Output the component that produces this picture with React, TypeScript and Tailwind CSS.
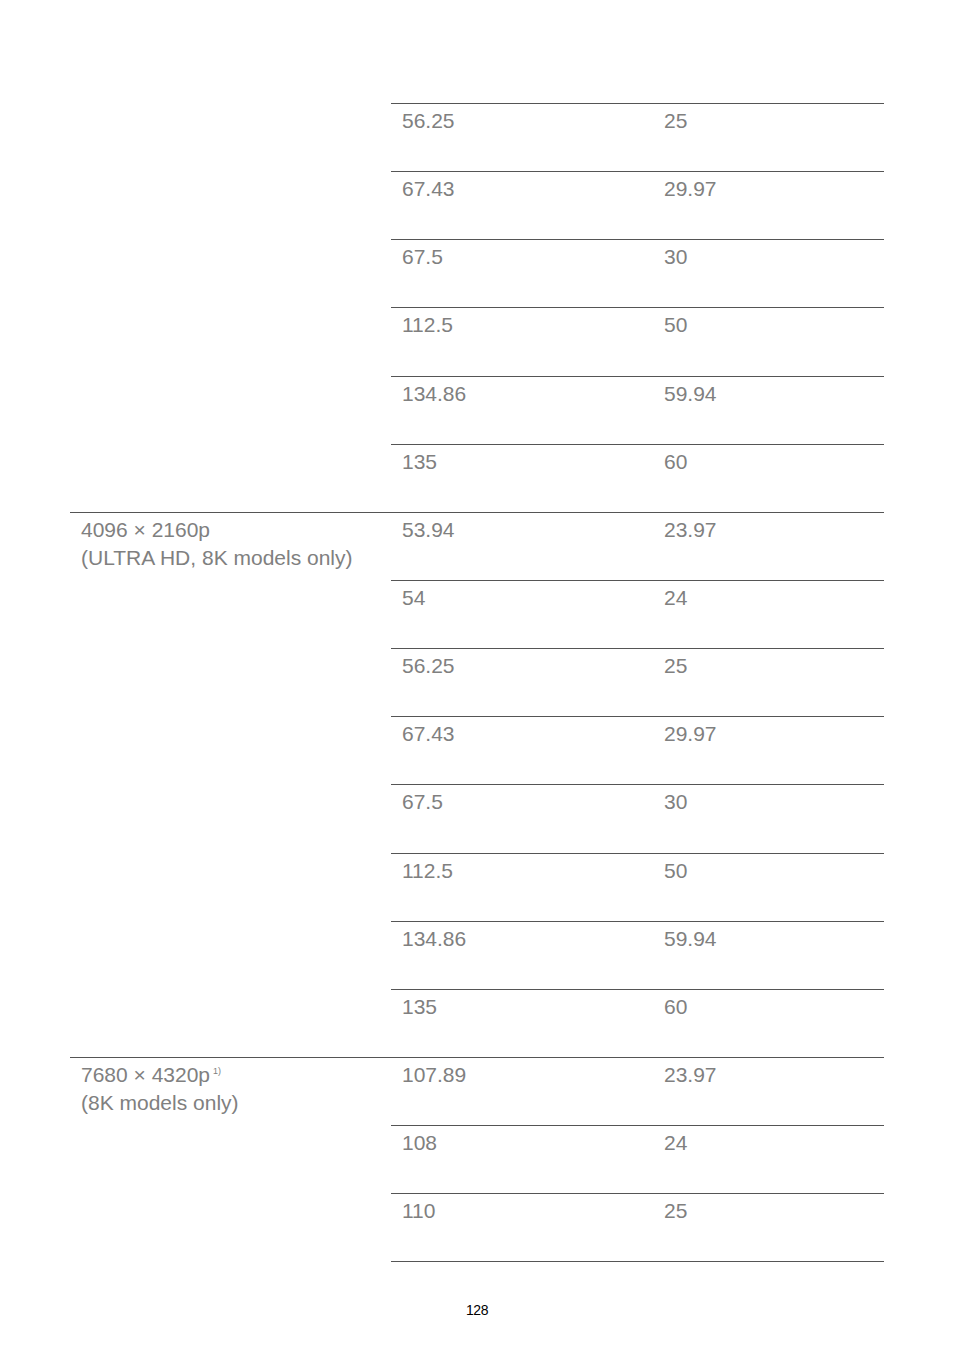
import React from 'react';

type Group = {
  label?: React.ReactNode;
  rows: [string, string][];
};

const groups: Group[] = [
  {
    rows: [
      ['56.25', '25'],
      ['67.43', '29.97'],
      ['67.5', '30'],
      ['112.5', '50'],
      ['134.86', '59.94'],
      ['135', '60'],
    ],
  },
  {
    label: (
      <>
        4096 × 2160p
        <br />
        (ULTRA HD, 8K models only)
      </>
    ),
    rows: [
      ['53.94', '23.97'],
      ['54', '24'],
      ['56.25', '25'],
      ['67.43', '29.97'],
      ['67.5', '30'],
      ['112.5', '50'],
      ['134.86', '59.94'],
      ['135', '60'],
    ],
  },
  {
    label: (
      <>
        7680 × 4320p<sup className="ml-[3px] text-[9px] -top-[8px]">1)</sup>
        <br />
        (8K models only)
      </>
    ),
    rows: [
      ['107.89', '23.97'],
      ['108', '24'],
      ['110', '25'],
    ],
  },
];

export default function App() {
  return (
    <div
      className="w-[954px] min-h-[1351px] bg-white pt-[103px] pl-[70px] text-[#808080]"
      style={{ fontFamily: '"Liberation Sans", Arial, sans-serif' }}
    >
      <div className="w-[814px]">
        {groups.map((g, gi) => (
          <div key={gi} className="flex">
            {/* 좌측 해상도 라벨 */}
            <div
              className={`w-[321px] shrink-0 pl-[11px] pt-[3px] text-[21px] leading-[28px] ${
                g.label ? 'border-t border-[#555]' : ''
              }`}
            >
              {g.label}
            </div>
            {/* 우측: 주파수 / 주사율 */}
            <div className={`flex-1 ${gi === groups.length - 1 ? 'border-b border-[#555]' : ''}`}>
              {g.rows.map(([h, v], ri) => (
                <div
                  key={ri}
                  className="grid grid-cols-[262px_1fr] h-[68.15px] border-t border-[#555] pt-[3px] text-[21px] leading-[28px]"
                >
                  <div className="pl-[11px]">{h}</div>
                  <div className="pl-[11px]">{v}</div>
                </div>
              ))}
            </div>
          </div>
        ))}
      </div>
      <div className="mt-[38px] -ml-[70px] w-[954px] text-center text-[14px] leading-[20px] text-black tracking-[-0.5px]">
        128
      </div>
    </div>
  );
}
